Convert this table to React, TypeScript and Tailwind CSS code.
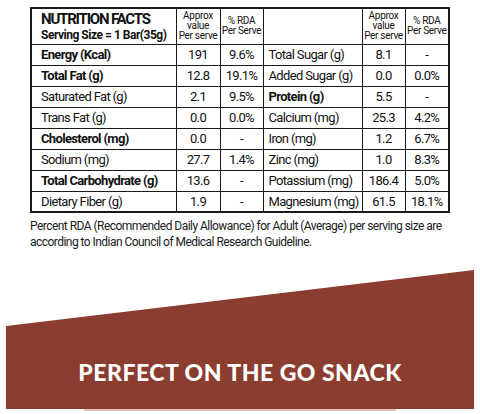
import React from "react";

type Row = { label: string; bold?: boolean; value: string; rda: string };

const left: Row[] = [
  { label: "Energy (Kcal)", bold: true, value: "191", rda: "9.6%" },
  { label: "Total Fat (g)", bold: true, value: "12.8", rda: "19.1%" },
  { label: "Saturated Fat (g)", value: "2.1", rda: "9.5%" },
  { label: "Trans Fat (g)", value: "0.0", rda: "0.0%" },
  { label: "Cholesterol (mg)", bold: true, value: "0.0", rda: "-" },
  { label: "Sodium (mg)", value: "27.7", rda: "1.4%" },
  { label: "Total Carbohydrate (g)", bold: true, value: "13.6", rda: "-" },
  { label: "Dietary Fiber (g)", value: "1.9", rda: "-" },
];

const right: Row[] = [
  { label: "Total Sugar (g)", value: "8.1", rda: "-" },
  { label: "Added Sugar (g)", value: "0.0", rda: "0.0%" },
  { label: "Protein (g)", bold: true, value: "5.5", rda: "-" },
  { label: "Calcium (mg)", value: "25.3", rda: "4.2%" },
  { label: "Iron (mg)", value: "1.2", rda: "6.7%" },
  { label: "Zinc (mg)", value: "1.0", rda: "8.3%" },
  { label: "Potassium (mg)", value: "186.4", rda: "5.0%" },
  { label: "Magnesium (mg)", value: "61.5", rda: "18.1%" },
];

const cell = "border border-[#1a1a1a] h-[21px] p-0 leading-none";
const small = "font-normal text-[10px] leading-[11px] tracking-[-0.03em]";

export default function App() {
  return (
    <div className="w-[480px] h-[414px] bg-white overflow-hidden font-['Roboto',sans-serif] text-[#111]">
      {/* Nutrition table */}
      <div className="pl-[30px] pt-[7px]">
        <table className="table-fixed border-collapse border-2 border-[#1a1a1a] w-[418px] text-[13px] tracking-[-0.05em]">
          <colgroup>
            <col className="w-[145px]" />
            <col className="w-[44px]" />
            <col className="w-[43px]" />
            <col className="w-[99px]" />
            <col className="w-[43px]" />
            <col className="w-[44px]" />
          </colgroup>
          <thead>
            <tr className="h-[36px]">
              <th className={`${cell} h-[36px] text-left pl-[9px] font-bold align-middle`}>
                <div className="text-[15px] leading-[16px] tracking-[-0.08em]">NUTRITION FACTS</div>
                <div className="text-[12px] leading-[14px] mt-[1px] tracking-[-0.04em]">Serving Size = 1 Bar(35g)</div>
              </th>
              <th className={`${cell} ${small}`}>
                Approx<br />value<br />Per serve
              </th>
              <th className={`${cell} ${small}`}>
                % RDA<br />Per Serve
              </th>
              <th className={cell}></th>
              <th className={`${cell} ${small}`}>
                Approx<br />value<br />Per serve
              </th>
              <th className={`${cell} ${small}`}>
                % RDA<br />Per Serve
              </th>
            </tr>
          </thead>
          <tbody>
            {left.map((l, i) => {
              const r = right[i];
              return (
                <tr key={l.label}>
                  <td className={`${cell} pl-[9px] ${l.bold ? "font-bold" : ""}`}>{l.label}</td>
                  <td className={`${cell} text-center`}>{l.value}</td>
                  <td className={`${cell} text-center`}>{l.rda}</td>
                  <td className={`${cell} pl-[5px] ${r.bold ? "font-bold" : ""}`}>{r.label}</td>
                  <td className={`${cell} text-center`}>{r.value}</td>
                  <td className={`${cell} text-center`}>{r.rda}</td>
                </tr>
              );
            })}
          </tbody>
        </table>
        <p className="mt-[5px] whitespace-nowrap text-[12px] leading-[16px] tracking-[-0.045em] text-[#1a1a1a]">
          Percent RDA (Recommended Daily Allowance) for Adult (Average) per serving size are
          <br />
          according to Indian Council of Medical Research Guideline.
        </p>
      </div>

      {/* Brown banner */}
      <div className="mx-[6px] mt-[20px] h-[139px] bg-[#8b3e2f] [clip-path:polygon(0_56px,100%_0,100%_100%,0_100%)] flex flex-col items-center justify-end">
        <h2 className="font-['Lato',sans-serif] font-black text-white text-[23px] leading-none uppercase tracking-[0.5px] mb-[25px]">
          Perfect on the go snack
        </h2>
      </div>
      <div className="mx-auto w-[312px] h-[2px] bg-[#dfc3bb]" />
    </div>
  );
}
